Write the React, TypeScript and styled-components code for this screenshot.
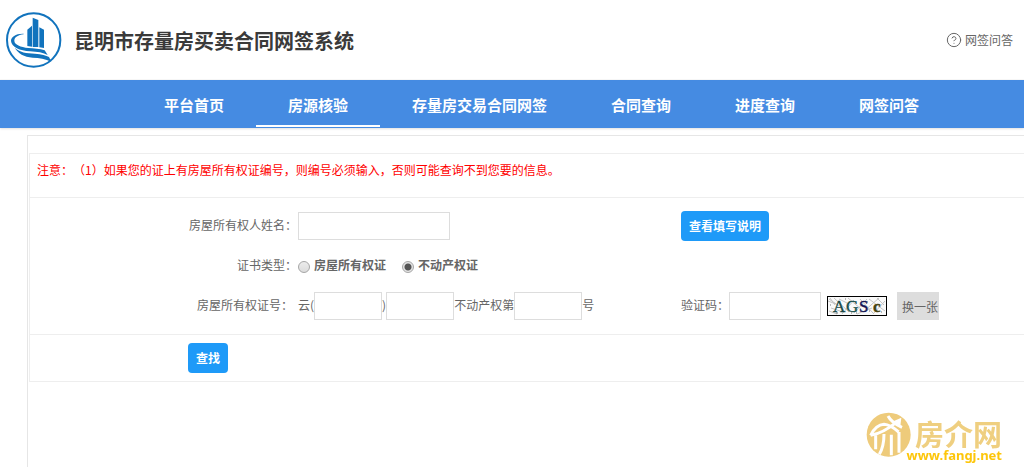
import React, { useState } from "react";
import styled, { createGlobalStyle } from "styled-components";
import { CircleHelp } from "lucide-react";

const GlobalStyle = createGlobalStyle`
  *, *::before, *::after { box-sizing: border-box; }
  html, body { margin: 0; background: #fff; overflow-x: hidden; }
  body, button, input {
    font-family: "Noto Sans CJK SC", sans-serif;
    font-size: 12px;
    line-height: 20px;
    color: #666;
    text-spacing-trim: space-all;
  }
  #root { display: flex; flex-direction: column; min-height: 100vh; }
`;

const Header = styled.header`
  display: flex;
  align-items: center;
  height: 80px;
  padding: 0 11px 0 6px;
  border-bottom: 1px solid #f8f8f8;
`;

const Title = styled.h1`
  flex: 1;
  margin: 2px 0 0 12px;
  font-size: 20px;
  line-height: 28px;
  font-weight: 700;
  color: #3a3a3a;
`;

const HelpLink = styled.a`
  display: flex;
  align-items: center;
  gap: 3px;
  color: #666;
  text-decoration: none;
`;

const Nav = styled.nav`
  display: flex;
  height: 48px;
  padding-left: 132px;
  background: #458be2;
  box-shadow: 0 1px 2px rgba(0, 0, 0, 0.12);
`;

const NavLink = styled.a<{ $active?: boolean }>`
  height: 47px;
  padding: 3px 32px 0;
  border-bottom: 2px solid ${(p) => (p.$active ? "#fff" : "transparent")};
  font-size: 15px;
  line-height: 44px;
  font-weight: 700;
  color: #fff;
  text-decoration: none;
  white-space: nowrap;
`;

const Main = styled.main`
  flex: 1;
  margin: 7px 0 0 27px;
  padding: 17px 0 0 1px;
  border: solid #e6e6e6;
  border-width: 1px 0 0 1px;
`;

const Form = styled.form`
  border: solid #eee;
  border-width: 1px 0 1px 1px;
`;

const Notice = styled.p`
  height: 44px;
  margin: 0;
  padding: 6px 7px;
  border-bottom: 1px solid #eee;
  color: #f00;
`;

const Fields = styled.div`
  padding: 8px 0;
  border-bottom: 1px solid #eee;
`;

const Row = styled.div`
  display: grid;
  grid-template-columns: 268px 383px 1fr;
  align-items: center;
  height: 40px;
  white-space: nowrap;
`;

const LabelCell = styled.div<{ $gap?: number }>`
  padding-right: ${(p) => p.$gap ?? 1}px;
  padding-bottom: 2px;
  text-align: right;
`;

const Cell = styled.div`
  display: flex;
  align-items: center;
`;

const Text = styled.span`
  padding-bottom: 2px;
`;

const TextLabel = styled.label`
  padding-bottom: 2px;
`;

const TextInput = styled.input<{ $width: number }>`
  width: ${(p) => p.$width}px;
  height: 28px;
  padding: 0 4px;
  border: 1px solid #ddd;
  background: #fff;
  outline: none;
`;

const Choice = styled.label`
  display: flex;
  align-items: center;
  gap: 4px;
  margin-right: 16px;
  font-weight: 700;
`;

const Radio = styled.input`
  appearance: none;
  width: 12px;
  height: 12px;
  margin: 2px 0 0;
  border: 1px solid #a6a6a6;
  border-radius: 50%;
  background: linear-gradient(#ececec, #dcdcdc);
  &:checked {
    background: radial-gradient(circle, #555 0 3px, #e4e4e4 4px);
  }
`;

const PrimaryButton = styled.button`
  height: 30px;
  padding: 0 8px;
  border: 0;
  border-radius: 4px;
  background: #1e9af8;
  color: #fff;
  font-weight: 700;
  cursor: pointer;
`;

const RefreshButton = styled.button`
  height: 28px;
  padding: 2px 1px 0 5px;
  border: 0;
  background: #ddd;
  cursor: pointer;
`;

const Captcha = styled.svg`
  margin: 0 10px 0 6px;
`;

const Actions = styled.div`
  padding: 8px 158px;
  height: 46px;
`;

const Watermark = styled.aside`
  position: fixed;
  right: 22px;
  bottom: 5px;
  display: flex;
  align-items: flex-start;
  pointer-events: none;
`;

const WatermarkText = styled.div`
  display: flex;
  flex-direction: column;
  align-items: flex-end;
  margin-left: -5px;
  padding-top: 6px;
`;

const WatermarkName = styled.span`
  font-size: 29px;
  line-height: 30px;
  font-weight: 700;
  color: #efcf80;
`;

const WatermarkUrl = styled.span`
  font-family: "Noto Sans", sans-serif;
  font-size: 13px;
  line-height: 14px;
  font-weight: 700;
  color: #fdc60a;
`;

const Logo = () => (
  <svg width="56" height="56" viewBox="18 20 168 168" aria-hidden="true">
    <g fill="#1173bd">
      <circle cx="101" cy="104" r="80" fill="none" stroke="#1173bd" strokeWidth="6" />
      <path d="M82 73 96 61V124L82 122Z" />
      <path d="M98 37 115 44V125H98Z" />
      <path d="M118 66 132 73V128L118 126Z" />
      <path d="M71 85C48 84 33 94 33 107C34 124 60 137 90 138C112 139 130 142 143 149L134 135C120 129 100 130 85 128C62 125 43 118 43 106C43 96 54 89 71 87Z" />
      <path d="M44 127C58 141 80 144 105 145C125 146 138 150 147 155L154 169C136 160 118 158 98 157C72 155 54 144 44 127Z" />
    </g>
  </svg>
);

const WatermarkLogo = () => (
  <svg width="46" height="46" viewBox="0 0 138 138" aria-hidden="true">
    <circle cx="68" cy="68" r="66" fill="#eecb7b" />
    <g fill="none" stroke="#fff" strokeWidth="9">
      <path d="M14 70C24 50 38 38 54 37C70 38 82 46 98 60" />
      <path d="M14 70C42 66 68 50 94 29" />
      <path d="M66 12C74 27 90 38 108 46" />
      <path d="M29 70V112M54 66C54 92 50 110 40 127M76 68V130M99 60V122" />
    </g>
    <path d="M82 28 106 17 103 43Z" fill="#fff" />
  </svg>
);

const CaptchaImage = () => (
  <Captcha width="60" height="20" viewBox="0 0 60 20" role="img" aria-label="验证码图片">
    <rect x="0.5" y="0.5" width="59" height="19" fill="#fafafa" stroke="#000" />
    <path
      d="M2 3 12 10M1 5 9 8M3 2 8 9M7 2 22 16M2 15 10 18M12 3 20 7M15 18 27 4M21 2 34 13M27 17 40 3M33 3 46 17M36 16 52 2M42 3 58 15M46 18 58 5M50 2 57 9M4 12 16 16M30 18 45 12"
      stroke="#c4c4c4"
      fill="none"
    />
    <path d="M9 17h2M18 3h1M29 17h1M40 6h1M42 15h1M54 16h1M24 17h1M3 9h1" stroke="#777" />
    <g fontFamily="Liberation Serif, serif" fontSize="17" strokeWidth="0.4">
      <text x="6" y="16" fill="#174845" stroke="#174845">A</text>
      <text x="19" y="16" fill="#17504c" stroke="#17504c">G</text>
      <text x="32" y="16" fill="#111252" stroke="#111252">S</text>
      <text x="46" y="16" fill="#45430f" stroke="#45430f" fontWeight="700">c</text>
    </g>
  </Captcha>
);

const navItems = ["平台首页", "房源核验", "存量房交易合同网签", "合同查询", "进度查询", "网签问答"];
const certificateTypes = ["房屋所有权证", "不动产权证"];

export default function App() {
  const [certificate, setCertificate] = useState("不动产权证");

  return (
    <>
      <GlobalStyle />
      <Header>
        <Logo />
        <Title>昆明市存量房买卖合同网签系统</Title>
        <HelpLink href="#help">
          <CircleHelp size={16} strokeWidth={1.5} aria-hidden="true" />
          网签问答
        </HelpLink>
      </Header>
      <Nav>
        {navItems.map((item) => (
          <NavLink key={item} href="#" $active={item === "房源核验"}>
            {item}
          </NavLink>
        ))}
      </Nav>
      <Main>
        <Form onSubmit={(e) => e.preventDefault()}>
          <Notice>
            注意：（1）如果您的证上有房屋所有权证编号，则编号必须输入，否则可能查询不到您要的信息。
          </Notice>
          <Fields>
            <Row>
              <LabelCell>
                <label htmlFor="owner">房屋所有权人姓名：</label>
              </LabelCell>
              <Cell>
                <TextInput id="owner" type="text" $width={152} />
              </Cell>
              <Cell>
                <PrimaryButton type="button">查看填写说明</PrimaryButton>
              </Cell>
            </Row>
            <Row role="radiogroup" aria-labelledby="certificate-label">
              <LabelCell id="certificate-label">证书类型：</LabelCell>
              <Cell>
                {certificateTypes.map((type) => (
                  <Choice key={type}>
                    <Radio
                      type="radio"
                      name="certificate"
                      checked={certificate === type}
                      onChange={() => setCertificate(type)}
                    />
                    <Text>{type}</Text>
                  </Choice>
                ))}
              </Cell>
            </Row>
            <Row>
              <LabelCell $gap={5}>
                <label htmlFor="year">房屋所有权证号：</label>
              </LabelCell>
              <Cell>
                <Text>云(</Text>
                <TextInput id="year" type="text" $width={68} />
                <Text>)</Text>
                <TextInput type="text" aria-label="地区" $width={68} />
                <TextLabel htmlFor="number">不动产权第</TextLabel>
                <TextInput id="number" type="text" $width={68} />
                <Text>号</Text>
              </Cell>
              <Cell>
                <TextLabel htmlFor="captcha">验证码：</TextLabel>
                <TextInput id="captcha" type="text" $width={92} />
                <CaptchaImage />
                <RefreshButton type="button">换一张</RefreshButton>
              </Cell>
            </Row>
          </Fields>
          <Actions>
            <PrimaryButton type="submit">查找</PrimaryButton>
          </Actions>
        </Form>
      </Main>
      <Watermark>
        <WatermarkLogo />
        <WatermarkText>
          <WatermarkName>房介网</WatermarkName>
          <WatermarkUrl>www.fangj.net</WatermarkUrl>
        </WatermarkText>
      </Watermark>
    </>
  );
}
